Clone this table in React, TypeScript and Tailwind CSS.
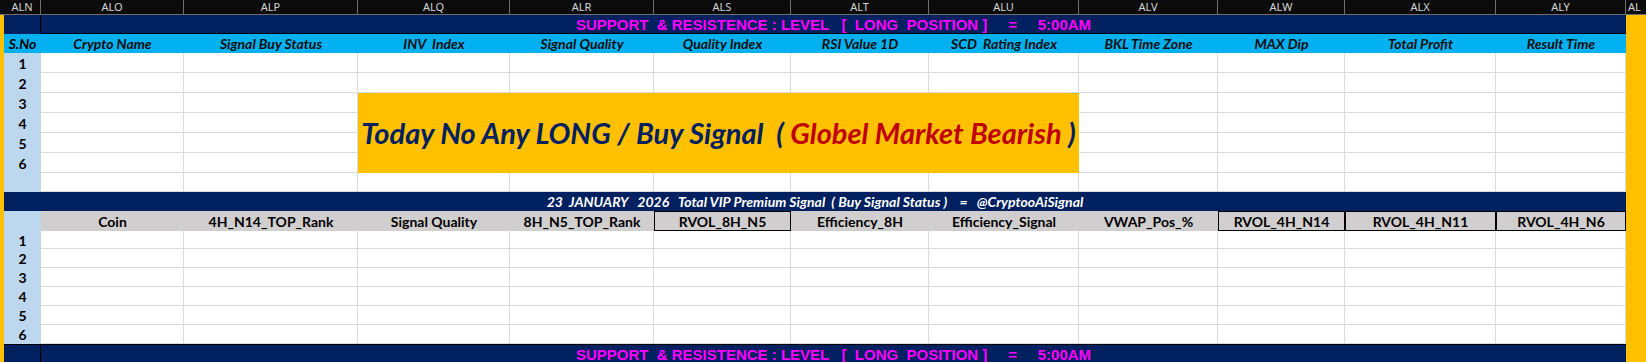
const GRID =
  'grid grid-cols-[4px_37px_143px_174px_152px_144px_137px_138px_150px_139px_127px_151px_130px_20px]'

const letters = ['ALN', 'ALO', 'ALP', 'ALQ', 'ALR', 'ALS', 'ALT', 'ALU', 'ALV', 'ALW', 'ALX', 'ALY']

const topHeads = [
  'Crypto Name',
  'Signal Buy Status',
  'INV  Index',
  'Signal Quality',
  'Quality Index',
  'RSI Value 1D',
  'SCD  Rating Index',
  'BKL Time Zone',
  'MAX Dip',
  'Total Profit',
  'Result Time',
]

const lowHeads = [
  'Coin',
  '4H_N14_TOP_Rank',
  'Signal Quality',
  '8H_N5_TOP_Rank',
  'RVOL_8H_N5',
  'Efficiency_8H',
  'Efficiency_Signal',
  'VWAP_Pos_%',
  'RVOL_4H_N14',
  'RVOL_4H_N11',
  'RVOL_4H_N6',
]
const boxed = [4, 8, 9, 10]

const calibri = "font-['Lato',sans-serif]"
const arial = "font-['Liberation_Sans',Arial,sans-serif]"
const title = 'SUPPORT  & RESISTENCE : LEVEL   [  LONG  POSITION ]     =     5:00AM'

const Strip = ({ h }: { h: string }) => <div className={`${h} bg-[#ffc000]`} />

const RowNo = ({ n, h }: { n?: number; h: string }) => (
  <div className={`${h} ${calibri} flex items-center justify-center bg-[#bdd7ee] text-[14px] font-bold text-black`}>
    {n}
  </div>
)

const Blank = ({ h }: { h: string }) => <div className={`${h} border-r border-b border-[#dadada] bg-white`} />

export default function App() {
  const lowHeights = ['h-[18px]', 'h-[19px]', 'h-[19px]', 'h-[19px]', 'h-[19px]', 'h-[19px]']

  return (
    <div className="h-[362px] w-[1646px] overflow-hidden bg-white">
      <div className={GRID}>
        {/* column letters */}
        <div className="h-[15px] border-b border-[#6e6e6e] bg-[#0b0b0b]" />
        {letters.map((l) => (
          <div
            key={l}
            className="flex h-[15px] items-center justify-center border-r border-b border-[#6e6e6e] bg-[#0b0b0b] font-['Noto_Sans',sans-serif] text-[11px] leading-[14px] text-[#d4d4d4]"
          >
            {l}
          </div>
        ))}
        <div className="flex h-[15px] items-center overflow-hidden border-b border-[#6e6e6e] bg-[#0b0b0b] pl-[2px] font-['Noto_Sans',sans-serif] text-[11px] leading-[14px] text-[#d4d4d4]">
          AL
        </div>

        {/* title bar */}
        <Strip h="h-[19px]" />
        <div className="h-[19px] border-r border-black bg-[#002060]" />
        <div
          className={`col-span-11 flex h-[19px] items-center justify-center border-b border-black bg-[#002060] ${arial} whitespace-pre text-[15px] font-bold leading-none text-[#ff00ff]`}
        >
          {title}
        </div>
        <Strip h="h-[19px]" />

        {/* header */}
        <Strip h="h-[19px]" />
        <div className={`flex h-[19px] items-center justify-center bg-[#00b0f0] ${calibri} text-[14px] font-bold italic text-black`}>
          S.No
        </div>
        {topHeads.map((t) => (
          <div
            key={t}
            className={`flex h-[19px] items-center justify-center bg-[#00b0f0] ${calibri} whitespace-pre text-[14px] font-bold italic text-[#0d0d0d]`}
          >
            {t}
          </div>
        ))}
        <Strip h="h-[19px]" />

        {/* rows 1-6 with merged message */}
        {[1, 2, 3, 4, 5, 6].map((n) => (
          <div key={n} className="contents">
            <Strip h="h-[20px]" />
            <RowNo n={n} h="h-[20px]" />
            {topHeads.map((_, i) => {
              if (n >= 3 && i >= 2 && i <= 6) {
                if (n === 3 && i === 2)
                  return (
                    <div
                      key={i}
                      className={`col-span-5 row-span-4 flex items-center justify-center bg-[#ffc000] ${calibri} whitespace-pre text-[29px] font-bold italic text-[#002060]`}
                    >
                      Today No Any LONG / Buy Signal  ( <span className="text-[#c00000]">Globel Market Bearish</span> )
                    </div>
                  )
                return null
              }
              return <Blank key={i} h="h-[20px]" />
            })}
            <Strip h="h-[20px]" />
          </div>
        ))}
        <Strip h="h-[19px]" />
        <RowNo h="h-[19px]" />
        {topHeads.map((_, i) => (
          <Blank key={i} h="h-[19px]" />
        ))}
        <Strip h="h-[19px]" />

        {/* second bar */}
        <Strip h="h-[19px]" />
        <div
          className={`col-span-12 flex h-[19px] items-center justify-center bg-[#002060] ${calibri} whitespace-pre text-[14px] font-bold italic text-white`}
        >
          23  JANUARY   2026   Total VIP Premium Signal  ( Buy Signal Status )    =   @CryptooAiSignal
        </div>
        <Strip h="h-[19px]" />

        {/* gray header */}
        <Strip h="h-[20px]" />
        <RowNo h="h-[20px]" />
        {lowHeads.map((t, i) => (
          <div
            key={t}
            className={`flex h-[20px] items-center justify-center bg-[#d0cece] ${calibri} text-[14px] font-bold text-black ${
              boxed.includes(i) ? 'border border-black' : ''
            }`}
          >
            {t}
          </div>
        ))}
        <Strip h="h-[20px]" />

        {lowHeights.map((h, r) => (
          <div key={r} className="contents">
            <Strip h={h} />
            <RowNo n={r + 1} h={h} />
            {lowHeads.map((_, i) => (
              <Blank key={i} h={h} />
            ))}
            <Strip h={h} />
          </div>
        ))}

        {/* bottom bar */}
        <Strip h="h-[19px]" />
        <div className="h-[19px] border-t border-r border-black bg-[#002060]" />
        <div
          className={`col-span-11 flex h-[19px] items-center justify-center border-t border-black bg-[#002060] ${arial} whitespace-pre text-[15px] font-bold leading-none text-[#ff00ff]`}
        >
          {title}
        </div>
        <Strip h="h-[19px]" />
      </div>
    </div>
  )
}
